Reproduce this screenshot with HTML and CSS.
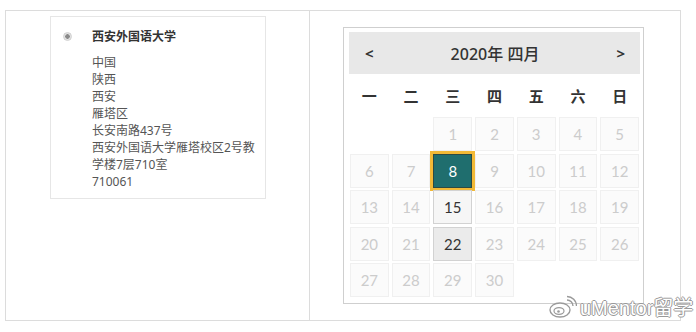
FILE: index.html
```html
<!DOCTYPE html>
<html lang="zh">
<head>
  <meta charset="UTF-8" />
  <meta name="viewport" content="width=device-width, initial-scale=1.0"/>
  <title>地址与日期</title>
  <link rel="stylesheet" href="styles.css">
</head>
<body>
  <div class="panel">
    <div class="col-left">
      <div class="address-card">
        <span class="radio"></span>
        <div class="address">
          <div class="school">西安外国语大学</div>
          <div class="lines">
            中国<br>
            陕西<br>
            西安<br>
            雁塔区<br>
            长安南路437号<br>
            西安外国语大学雁塔校区2号教学楼7层710室<br>
            710061
          </div>
        </div>
      </div>
    </div>

    <div class="col-right">
      <div class="calendar">
        <div class="cal-head">
          <span class="nav">&lt;</span>
          <span class="month">2020年 四月</span>
          <span class="nav">&gt;</span>
        </div>
        <div class="weekdays">
          <span>一</span><span>二</span><span>三</span><span>四</span><span>五</span><span>六</span><span>日</span>
        </div>
        <div class="days">
          <span class="blank"></span>
          <span class="blank"></span>
          <span class="day">1</span>
          <span class="day">2</span>
          <span class="day">3</span>
          <span class="day">4</span>
          <span class="day">5</span>
          <span class="day">6</span>
          <span class="day">7</span>
          <span class="day selected">8</span>
          <span class="day">9</span>
          <span class="day">10</span>
          <span class="day">11</span>
          <span class="day">12</span>
          <span class="day">13</span>
          <span class="day">14</span>
          <span class="day open">15</span>
          <span class="day">16</span>
          <span class="day">17</span>
          <span class="day">18</span>
          <span class="day">19</span>
          <span class="day">20</span>
          <span class="day">21</span>
          <span class="day open today">22</span>
          <span class="day">23</span>
          <span class="day">24</span>
          <span class="day">25</span>
          <span class="day">26</span>
          <span class="day">27</span>
          <span class="day">28</span>
          <span class="day">29</span>
          <span class="day">30</span>
        </div>
      </div>
    </div>
  </div>

  <div class="watermark">
    <svg width="28" height="24" viewBox="0 0 28 24">
      <ellipse cx="11" cy="15" rx="10" ry="7" fill="#fff" stroke="#9a9a9a" stroke-width="1.4"/>
      <ellipse cx="10" cy="16" rx="5" ry="3.4" fill="none" stroke="#9a9a9a" stroke-width="1.2"/>
      <circle cx="9.5" cy="16.5" r="1.3" fill="#9a9a9a"/>
      <path d="M18 5 a6 6 0 0 1 6 6" fill="none" stroke="#9a9a9a" stroke-width="1.4"/>
      <path d="M18 1.5 a9.5 9.5 0 0 1 9.5 9.5" fill="none" stroke="#9a9a9a" stroke-width="1.4"/>
    </svg>
    <span>uMentor留学</span>
  </div>
</body>
</html>
```

FILE: styles.css
```css
body {
  margin: 0;
  background: #fff;
  font-family: "Noto Sans", "Noto Sans CJK SC", sans-serif;
  color: #333;
}

.panel {
  display: flex;
  width: 674px;
  height: 309px;
  margin: 10px 0 0 5px;
  border: 1px solid #dcdcdc;
}

.col-left {
  width: 304px;
  border-right: 1px solid #dcdcdc;
  padding: 5px 0 0 44px;
  box-sizing: border-box;
}

.address-card {
  display: flex;
  width: 216px;
  height: 183px;
  box-sizing: border-box;
  border: 1px solid #e6e6e6;
  padding: 12px 0 0 12px;
}

.radio {
  width: 9px;
  height: 9px;
  margin-top: 3px;
  border-radius: 50%;
  background: radial-gradient(circle, #8a8a8a 0 2px, #e2e2e2 2.5px);
  border: 1px solid #d0d0d0;
  box-sizing: border-box;
  flex-shrink: 0;
}

.address {
  margin-left: 20px;
  width: 170px;
  font-size: 12px;
}

.school {
  font-weight: 700;
  color: #333;
  line-height: 16px;
}

.lines {
  margin-top: 9px;
  line-height: 17px;
  color: #555;
}

.col-right {
  flex: 1;
  padding: 16px 0 0 33px;
}

.calendar {
  width: 301px;
  height: 277px;
  box-sizing: border-box;
  border: 1px solid #cfcfcf;
  padding: 4px 3px 0 5px;
}

.cal-head {
  display: flex;
  align-items: center;
  justify-content: space-between;
  height: 42px;
  padding: 0 15px 0 16px;
  background: #e8e8e8;
  font-size: 16px;
  color: #333;
}

.nav {
  font-weight: 700;
  font-size: 15px;
}

.month {
  font-weight: 500;
}

.weekdays {
  display: grid;
  grid-template-columns: repeat(7, 1fr);
  column-gap: 3px;
  width: 289px;
  margin-left: 1px;
  height: 43px;
  align-items: center;
  text-align: center;
  font-size: 15px;
  font-weight: 700;
  color: #333;
}

.days {
  display: grid;
  grid-template-columns: repeat(7, 1fr);
  grid-auto-rows: 34px;
  column-gap: 3px;
  row-gap: 2.5px;
  width: 289px;
  margin-left: 1px;
}

.day {
  display: flex;
  align-items: center;
  justify-content: center;
  background: #fbfbfb;
  border: 1px solid #f0f0f0;
  font-family: "Lato", "Noto Sans", sans-serif;
  font-size: 15px;
  color: #cccccc;
}

.day.open {
  background: #f6f6f6;
  border-color: #d2d2d2;
  color: #333;
}

.day.today {
  background: #ebebeb;
}

.day.selected {
  background: #1f6e6e;
  border-color: #2d4a42;
  outline: 3px solid #f2b936;
  color: #fff;
}

.watermark {
  position: absolute;
  left: 549px;
  top: 292px;
  display: flex;
  align-items: center;
  gap: 3px;
  font-family: "Liberation Sans", "Noto Sans CJK SC", sans-serif;
  font-size: 20px;
  color: #fff;
  text-shadow: 1px 0 0 #999, -1px 0 0 #999, 0 1px 0 #999, 0 -1px 0 #999;
}
```
